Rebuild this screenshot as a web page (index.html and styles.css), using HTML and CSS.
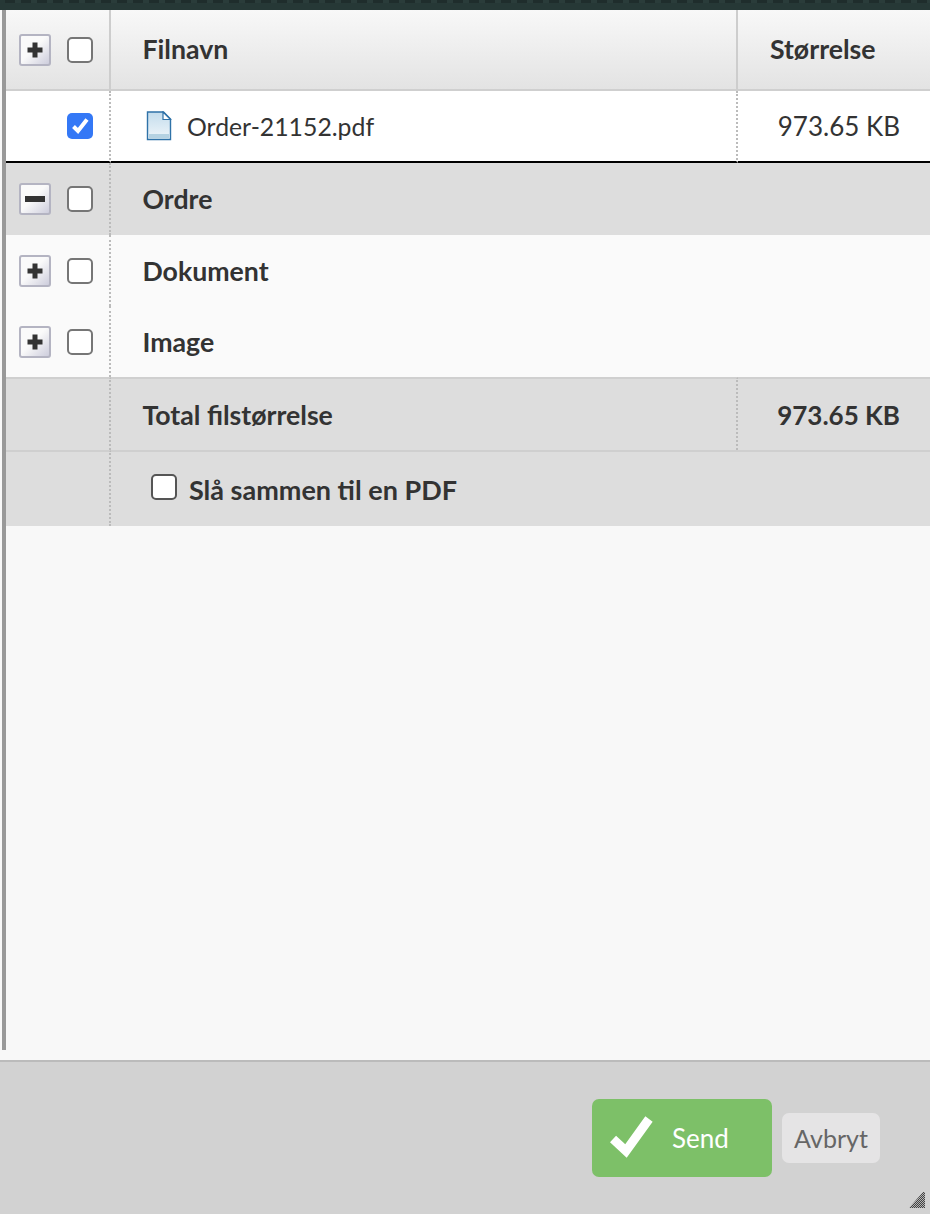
FILE: index.html
```html
<!DOCTYPE html>
<html lang="no">
<head>
<meta charset="utf-8">
<title>Send filer</title>
<link rel="stylesheet" href="styles.css">
</head>
<body>
<div class="topbar"></div>
<main class="panel">
  <table class="files">
    <colgroup><col class="c-tools"><col class="c-name"><col class="c-size"></colgroup>
    <thead>
      <tr class="head">
        <th class="tools"><div class="tool-wrap"><span class="tog"><svg viewBox="0 0 20 20" class="sign"><path d="M7.500 2.500h5v5h5v5h-5v5h-5v-5h-5v-5h5z"/></svg></span><span class="cb"></span></div></th>
        <th class="name">Filnavn</th>
        <th class="size">Størrelse</th>
      </tr>
    </thead>
    <tbody>
      <tr class="file">
        <td class="tools"><div class="tool-wrap"><span class="tog-empty"></span><span class="cb on"><svg viewBox="0 0 26 26"><path d="M6.500 13.500l4.500 4.500L20 6.500" fill="none" stroke="#fff" stroke-width="4"/></svg></span></div></td>
        <td class="name"><div class="file-name"><svg class="doc" viewBox="0 0 26 30"><path d="M1.500 1h16l7 7v20.500h-23z" fill="url(#dg)" stroke="#2f72a8" stroke-width="1.400"/><path d="M3 23h20v4.500H3z" fill="#b5d2e2"/><path d="M17 1v7.500h7.500z" fill="#fff" stroke="#2f72a8" stroke-width="1.200"/><defs><linearGradient id="dg" x1="0" y1="0" x2="0" y2="1"><stop offset="0" stop-color="#c3dcec"/><stop offset="1" stop-color="#f0f6fa"/></linearGradient></defs></svg><span>Order-21152.pdf</span></div></td>
        <td class="size num">973.65 KB</td>
      </tr>
      <tr class="group open">
        <td class="tools"><div class="tool-wrap"><span class="tog"><svg viewBox="0 0 20 20" class="sign"><path d="M0 7h20v6H0z"/></svg></span><span class="cb"></span></div></td>
        <td class="name" colspan="2">Ordre</td>
      </tr>
      <tr class="group">
        <td class="tools"><div class="tool-wrap"><span class="tog"><svg viewBox="0 0 20 20" class="sign"><path d="M7.500 2.500h5v5h5v5h-5v5h-5v-5h-5v-5h5z"/></svg></span><span class="cb"></span></div></td>
        <td class="name" colspan="2">Dokument</td>
      </tr>
      <tr class="group">
        <td class="tools"><div class="tool-wrap"><span class="tog"><svg viewBox="0 0 20 20" class="sign"><path d="M7.500 2.500h5v5h5v5h-5v5h-5v-5h-5v-5h5z"/></svg></span><span class="cb"></span></div></td>
        <td class="name" colspan="2">Image</td>
      </tr>
      <tr class="total">
        <td class="tools"></td>
        <td class="name">Total filstørrelse</td>
        <td class="size num">973.65 KB</td>
      </tr>
      <tr class="merge">
        <td class="tools"></td>
        <td class="name" colspan="2"><label class="merge-label"><span class="cb dark"></span>Slå sammen til en PDF</label></td>
      </tr>
    </tbody>
  </table>
</main>
<footer class="foot">
  <button class="send"><svg class="tick" viewBox="0 0 46 46"><path d="M3 24l13 12L39 4" fill="none" stroke="#fff" stroke-width="9"/></svg><span>Send</span></button>
  <button class="cancel">Avbryt</button>
  <svg class="grip" viewBox="0 0 16 16"><defs><pattern id="chk" width="2" height="2" patternUnits="userSpaceOnUse"><rect width="2" height="2" fill="#b5b5b5"/><rect width="1" height="1" fill="#444"/><rect x="1" y="1" width="1" height="1" fill="#444"/></pattern></defs><path d="M0 16L14 0h2v16z" fill="url(#chk)"/></svg>
</footer>
</body>
</html>
```

FILE: styles.css
```css
* { box-sizing: border-box; }
html, body { margin: 0; height: 100%; }
body {
  width: 930px;
  height: 1214px;
  overflow: hidden;
  display: flex;
  flex-direction: column;
  background: #f8f8f8;
  font-family: "Lato", "Liberation Sans", sans-serif;
  color: #333;
}
.topbar {
  height: 10px;
  flex: none;
  background-color: #263836;
  background-image: repeating-linear-gradient(90deg, #1f2d2c 0 10px, #2a3c3a 10px 16px);
  background-size: 100% 3px;
  background-repeat: no-repeat;
  background-position: 5px 0;
}
.panel {
  height: 1040px;
  flex: none;
  margin-left: 2px;
  border-left: 4px solid #999;
}
.files {
  width: 924px;
  border-collapse: separate;
  border-spacing: 0;
  table-layout: fixed;
  font-size: 26.700px;
}
.c-tools { width: 105px; }
.c-size { width: 192px; }
th, td { padding: 0; vertical-align: middle; text-align: left; }
.tools { border-right: 2px dotted #bbb; }
.name { padding-left: 31.500px; }
.head th {
  height: 81px;
  font-weight: 700;
  line-height: 27px;
  background: linear-gradient(#f8f8f8, #e3e3e3);
  border-bottom: 2px solid #cfcfcf;
}
.head .tools, .head .name { border-right: 2px solid #cdcdcd; }
.head .size { padding-left: 32px; }
.tool-wrap { display: flex; align-items: center; gap: 16px; padding-left: 13px; }
.tog, .tog-empty { width: 32px; height: 32px; flex: none; }
.tog {
  display: flex;
  align-items: center;
  justify-content: center;
  border: 2px solid #b4b4c2;
  border-radius: 3px;
  background: linear-gradient(135deg, #fafafa 45%, #cdcddc);
}
.sign { width: 20px; height: 20px; flex: none; fill: #333; }
.cb {
  width: 26px;
  height: 26px;
  flex: none;
  display: block;
  background: #fff;
  border: 2px solid #767676;
  border-radius: 5px;
}
.cb.on { background: #3478f6; border: 0; }
.cb.on svg { display: block; width: 26px; height: 26px; }
.cb.dark { border-color: #555; }
.file td { height: 72px; background: #fff; border-bottom: 2px solid #000; }
.file .tools { border-right: 2px dotted #bbb; }
.file .name { border-right: 2px dotted #bbb; padding-left: 35px; font-size: 24.800px; }
.file-name { display: flex; align-items: center; gap: 15px; }
.doc { width: 26px; height: 30px; flex: none; }
.num { text-align: right; padding-right: 30px; font-size: 26px; }
.group td { height: 71px; background: #fafafa; font-weight: 700; }
.group.open td { height: 72px; background: #ddd; }
.total td { height: 73px; background: #ddd; font-weight: 700; border-top: 2px solid #cfcfcf; }
.total .name { border-right: 2px dotted #bbb; }
.merge td { height: 76px; background: #ddd; font-weight: 700; border-top: 2px solid #cfcfcf; }
.merge .name { font-size: 27px; }
.merge-label { display: flex; align-items: center; gap: 12px; padding-left: 8.500px; }
.merge .cb { margin-top: -4px; }
.foot {
  margin-top: 10px;
  flex: 1;
  position: relative;
  display: flex;
  align-items: center;
  justify-content: flex-end;
  gap: 10px;
  padding: 0 50px 0 0;
  background: #d2d2d2;
  border-top: 2px solid #bbb;
}
button { font-family: inherit; font-size: 26px; border: 0; padding: 0; }
.send {
  width: 180px;
  height: 78px;
  display: flex;
  align-items: center;
  gap: 16px;
  padding-left: 18px;
  background: #7dc068;
  color: #fff;
  border-radius: 7px;
}
.tick { width: 46px; height: 46px; flex: none; filter: blur(.6px); }
.cancel {
  width: 98px;
  height: 50px;
  background: #e5e4e5;
  color: #666;
  font-size: 25px;
  border-radius: 7px;
}
.grip { position: absolute; right: 5px; bottom: 6px; width: 16px; height: 16px; }
```
